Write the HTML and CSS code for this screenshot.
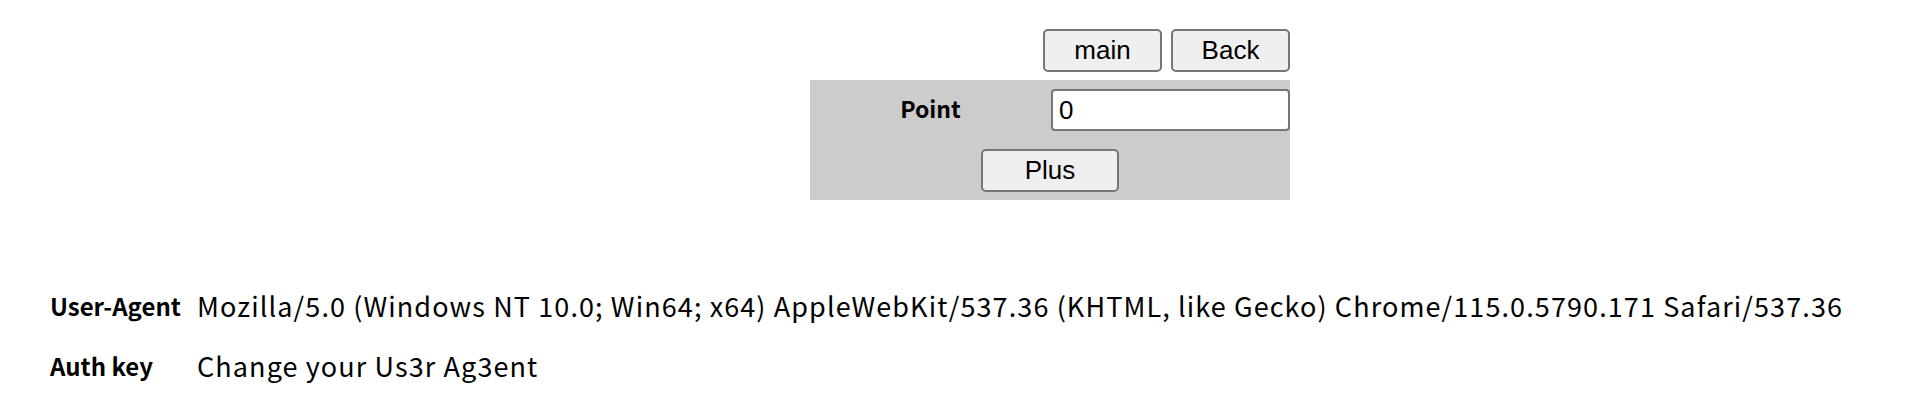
FILE: index.html
```html
<!DOCTYPE html>
<html>
<head>
<meta charset="utf-8">
<link rel="stylesheet" href="styles.css">
</head>
<body>
<div class="top">
  <div class="nav">
    <button class="btn nav-btn main-btn">main</button>
    <button class="btn nav-btn back-btn">Back</button>
  </div>
  <div class="panel">
    <div class="row">
      <div class="label">Point</div>
      <div class="field"><input class="input" type="text" value="0"></div>
    </div>
    <div class="row center">
      <button class="btn plus-btn">Plus</button>
    </div>
  </div>
</div>
<div class="info">
  <div class="info-row">
    <div class="info-label">User-Agent</div>
    <div class="info-value">Mozilla/5.0 (Windows NT 10.0; Win64; x64) AppleWebKit/537.36 (KHTML, like Gecko) Chrome/115.0.5790.171 Safari/537.36</div>
  </div>
  <div class="info-row">
    <div class="info-label">Auth key</div>
    <div class="info-value">Change your Us3r Ag3ent</div>
  </div>
</div>
</body>
</html>
```
FILE: styles.css
```css
html, body {
  margin: 0;
  padding: 0;
  background: #ffffff;
  color: #000000;
}
body {
  font-family: "Liberation Sans", Arial, sans-serif;
}
.top {
  padding-top: 29px;
  padding-left: 810px;
  width: 480px;
}
.nav {
  display: flex;
  justify-content: flex-end;
  gap: 9px;
  height: 43px;
  margin-bottom: 8px;
}
.btn {
  font-family: "Liberation Sans", Arial, sans-serif;
  font-size: 26px;
  color: #000;
  background: #efefef;
  border: 2px solid #767676;
  border-radius: 5px;
  padding: 0;
  height: 43px;
  box-sizing: border-box;
}
.main-btn { width: 119px; }
.back-btn { width: 119px; }
.panel {
  background: #cccccc;
  height: 120px;
  box-sizing: border-box;
  padding-top: 9px;
}
.row {
  display: flex;
  align-items: center;
  height: 42px;
}
.row.center {
  justify-content: center;
  margin-top: 18px;
  height: 43px;
}
.label {
  width: 241px;
  text-align: center;
  font-family: "Noto Sans CJK KR", "Noto Sans", sans-serif;
  font-weight: bold;
  font-size: 23px;
  margin-top: -5px;
}
.field {
  flex: 1;
  display: flex;
}
.input {
  width: 239px;
  height: 42px;
  box-sizing: border-box;
  border: 2px solid #767676;
  border-radius: 4px;
  background: #fff;
  font-family: "Liberation Sans", Arial, sans-serif;
  font-size: 26px;
  padding: 0 6px;
  color: #000;
}
.plus-btn {
  width: 138px;
}
.info {
  padding-top: 75px;
  padding-left: 50px;
}
.info-row {
  display: flex;
  align-items: center;
  height: 60px;
}
.info-label {
  width: 147px;
  font-family: "Noto Sans CJK KR", "Noto Sans", sans-serif;
  font-weight: bold;
  font-size: 24px;
}
.info-value {
  font-family: "Noto Sans CJK KR", "Noto Sans", sans-serif;
  font-size: 27px;
  letter-spacing: 1.1px;
  white-space: nowrap;
}
```
